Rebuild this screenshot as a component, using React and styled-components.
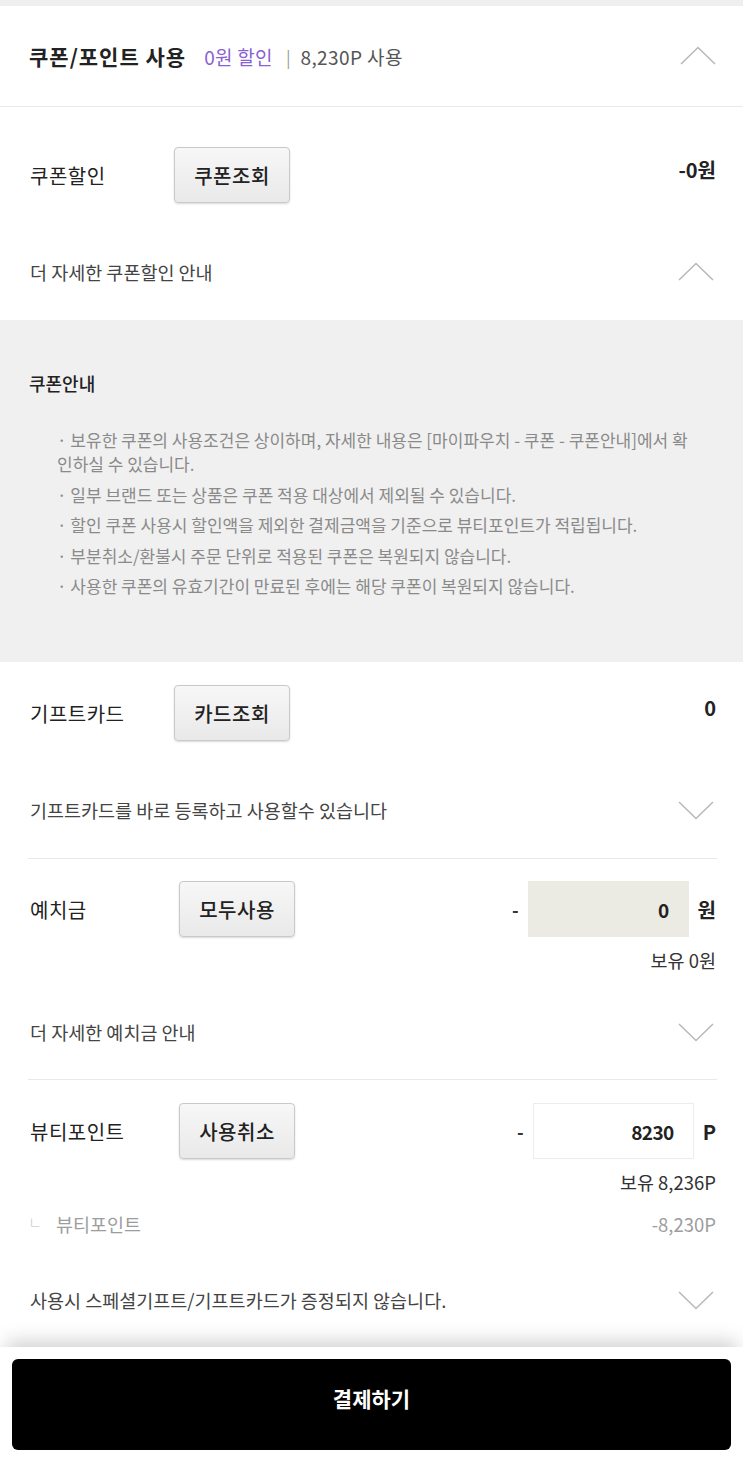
import React from 'react'
import styled, { createGlobalStyle } from 'styled-components'

const GlobalStyle = createGlobalStyle`
    body{
        margin: 0;
        background: #fff;
        font-family: "Noto Sans CJK KR", "Noto Sans", sans-serif;
        color: #222;
    }
`;

function Chevron({ up }) {
    return (
        <ChevronSvg width="36" height="20" viewBox="0 0 36 20">
            <polyline
                points={up ? '1,18 18,1.5 35,18' : '1,2 18,18.5 35,2'}
                fill="none"
                stroke="#b8b8b8"
                strokeWidth="1.5"
            />
        </ChevronSvg>
    )
}

const notes = [
    '보유한 쿠폰의 사용조건은 상이하며, 자세한 내용은 [마이파우치 - 쿠폰 - 쿠폰안내]에서 확인하실 수 있습니다.',
    '일부 브랜드 또는 상품은 쿠폰 적용 대상에서 제외될 수 있습니다.',
    '할인 쿠폰 사용시 할인액을 제외한 결제금액을 기준으로 뷰티포인트가 적립됩니다.',
    '부분취소/환불시 주문 단위로 적용된 쿠폰은 복원되지 않습니다.',
    '사용한 쿠폰의 유효기간이 만료된 후에는 해당 쿠폰이 복원되지 않습니다.',
];

function App() {
    return (
        <PageStyled>
            <GlobalStyle />
            <TopStrip />
            <Header>
                <Title>쿠폰/포인트 사용</Title>
                <Discount>0원 할인</Discount>
                <Sep>|</Sep>
                <Used>8,230P 사용</Used>
                <Chevron up />
            </Header>

            <Section>
                <FieldRow $top={40}>
                    <Label $w={144}>쿠폰할인</Label>
                    <GrayButton>쿠폰조회</GrayButton>
                    <Value>-0원</Value>
                </FieldRow>
                <ToggleRow $top={57} $bottom={36}>
                    <ToggleText>더 자세한 쿠폰할인 안내</ToggleText>
                    <Chevron up />
                </ToggleRow>
            </Section>

            <InfoPanel>
                <InfoTitle>쿠폰안내</InfoTitle>
                <NoteList>
                    {notes.map((n) => <li key={n}>{n}</li>)}
                </NoteList>
            </InfoPanel>

            <Section>
                <FieldRow $top={23}>
                    <Label $w={144}>기프트카드</Label>
                    <GrayButton>카드조회</GrayButton>
                    <Value>0</Value>
                </FieldRow>
                <ToggleRow $top={57} $bottom={36}>
                    <ToggleText>기프트카드를 바로 등록하고 사용할수 있습니다</ToggleText>
                    <Chevron />
                </ToggleRow>
                <Divider />

                <FieldRow $top={22}>
                    <Label $w={149}>예치금</Label>
                    <GrayButton>모두사용</GrayButton>
                    <AmountBox>
                        <Dash>-</Dash>
                        <AmountInput $filled>0</AmountInput>
                        <Unit>원</Unit>
                    </AmountBox>
                </FieldRow>
                <Holding>보유 0원</Holding>
                <ToggleRow $top={50} $bottom={35}>
                    <ToggleText>더 자세한 예치금 안내</ToggleText>
                    <Chevron />
                </ToggleRow>
                <Divider />

                <FieldRow $top={23}>
                    <Label $w={149}>뷰티포인트</Label>
                    <GrayButton>사용취소</GrayButton>
                    <AmountBox>
                        <Dash>-</Dash>
                        <AmountInput>8230</AmountInput>
                        <Unit>P</Unit>
                    </AmountBox>
                </FieldRow>
                <Holding>보유 8,236P</Holding>
                <SubLine>
                    <span><Elbow>└</Elbow>뷰티포인트</span>
                    <span>-8,230P</span>
                </SubLine>
                <ToggleRow $top={52} $bottom={35}>
                    <ToggleText>사용시 스페셜기프트/기프트카드가 증정되지 않습니다.</ToggleText>
                    <Chevron />
                </ToggleRow>
            </Section>

            <Footer>
                <PayButton>결제하기</PayButton>
            </Footer>
        </PageStyled>
    )
}

const PageStyled = styled.div`
    width: 743px;
    display: flex;
    flex-direction: column;
`;

const TopStrip = styled.div`
    height: 6px;
    background: #efefef;
`;

const Header = styled.div`
    height: 100px;
    display: flex;
    align-items: center;
    padding: 0 27px 0 29px;
    border-bottom: 1px solid #e9e9e9;
`;

const Title = styled.h2`
    margin: 0;
    font-size: 21px;
    font-weight: 700;
    letter-spacing: 1px;
    color: #222;
`;

const Discount = styled.span`
    margin-left: 18px;
    font-size: 19px;
    letter-spacing: 0.3px;
    color: #8a5fd3;
`;

const Sep = styled.span`
    margin: 0 10px 0 13px;
    font-size: 17px;
    color: #999;
`;

const Used = styled.span`
    font-size: 19px;
    letter-spacing: 0.4px;
    color: #555;
    flex: 1;
`;

const ChevronSvg = styled.svg`
    display: block;
    flex-shrink: 0;
`;

const Section = styled.div`
    padding: 0 27px 0 30px;
`;

const FieldRow = styled.div`
    display: flex;
    align-items: center;
    padding-top: ${p => p.$top}px;
`;

const Label = styled.div`
    width: ${p => p.$w}px;
    font-size: 20px;
    letter-spacing: 0.5px;
    color: #222;
`;

const GrayButton = styled.button`
    width: 116px;
    height: 56px;
    font-family: inherit;
    font-size: 20px;
    font-weight: 500;
    letter-spacing: 0.5px;
    color: #222;
    background: linear-gradient(#f7f7f7, #e9e9e9);
    border: 1px solid #c9c9c9;
    border-radius: 4px;
    box-shadow: 0 1px 2px rgba(0, 0, 0, 0.15);
    padding: 0;
`;

const Value = styled.div`
    margin-left: auto;
    margin-bottom: 12px;
    font-size: 20px;
    font-weight: 700;
    color: #222;
`;

const ToggleRow = styled.div`
    display: flex;
    align-items: center;
    justify-content: space-between;
    padding: ${p => p.$top}px 2px ${p => p.$bottom}px 0;
    height: 24px;
    box-sizing: content-box;
`;

const ToggleText = styled.span`
    font-size: 18.5px;
    color: #444;
`;

const InfoPanel = styled.div`
    background: #f0f0f0;
    padding: 52px 46px 64px 29px;
`;

const InfoTitle = styled.h3`
    margin: 0;
    font-size: 18px;
    font-weight: 500;
    line-height: 22px;
    color: #222;
`;

const NoteList = styled.ul`
    list-style: none;
    margin: 34px 0 0;
    padding: 0 0 0 28px;
    display: flex;
    flex-direction: column;
    gap: 6.5px;
    li{
        font-size: 17px;
        line-height: 24px;
        color: #8a8a8a;
        word-break: break-all;
        &::before{
            content: '· ';
        }
    }
`;

const Divider = styled.hr`
    margin: 0 -1px 0 -2px;
    border: none;
    border-top: 1px solid #e8e8e8;
`;

const AmountBox = styled.div`
    margin-left: auto;
    display: flex;
    align-items: center;
    gap: 9px;
`;

const Dash = styled.span`
    font-size: 18px;
    font-weight: 700;
    color: #333;
`;

const AmountInput = styled.div`
    width: 161px;
    height: 56px;
    box-sizing: border-box;
    display: flex;
    align-items: center;
    justify-content: flex-end;
    padding-right: 19px;
    font-size: 19px;
    font-weight: 700;
    letter-spacing: -0.6px;
    color: #222;
    background: ${p => p.$filled ? '#ebebe4' : '#fff'};
    border: 1px solid ${p => p.$filled ? '#ebebe4' : '#ececec'};
`;

const Unit = styled.span`
    font-size: 20px;
    font-weight: 700;
    color: #222;
`;

const Holding = styled.div`
    margin-top: 13px;
    text-align: right;
    font-size: 18.5px;
    line-height: 20px;
    color: #333;
`;

const SubLine = styled.div`
    margin-top: 22px;
    display: flex;
    justify-content: space-between;
    font-size: 18.5px;
    line-height: 20px;
    color: #9d9d9d;
`;

const Elbow = styled.span`
    display: inline-block;
    width: 32px;
    margin-left: -6px;
    font-size: 15px;
    color: #bbb;
`;

const Footer = styled.div`
    padding: 12px 12px 11px;
    background: #fff;
    box-shadow: 0 -12px 18px -6px rgba(0, 0, 0, 0.18);
    position: relative;
`;

const PayButton = styled.button`
    width: 100%;
    height: 91px;
    border: none;
    border-radius: 6px;
    background: #000;
    color: #fff;
    font-family: inherit;
    font-size: 21px;
    font-weight: 700;
    padding: 0 0 14px;
`;

export default App
